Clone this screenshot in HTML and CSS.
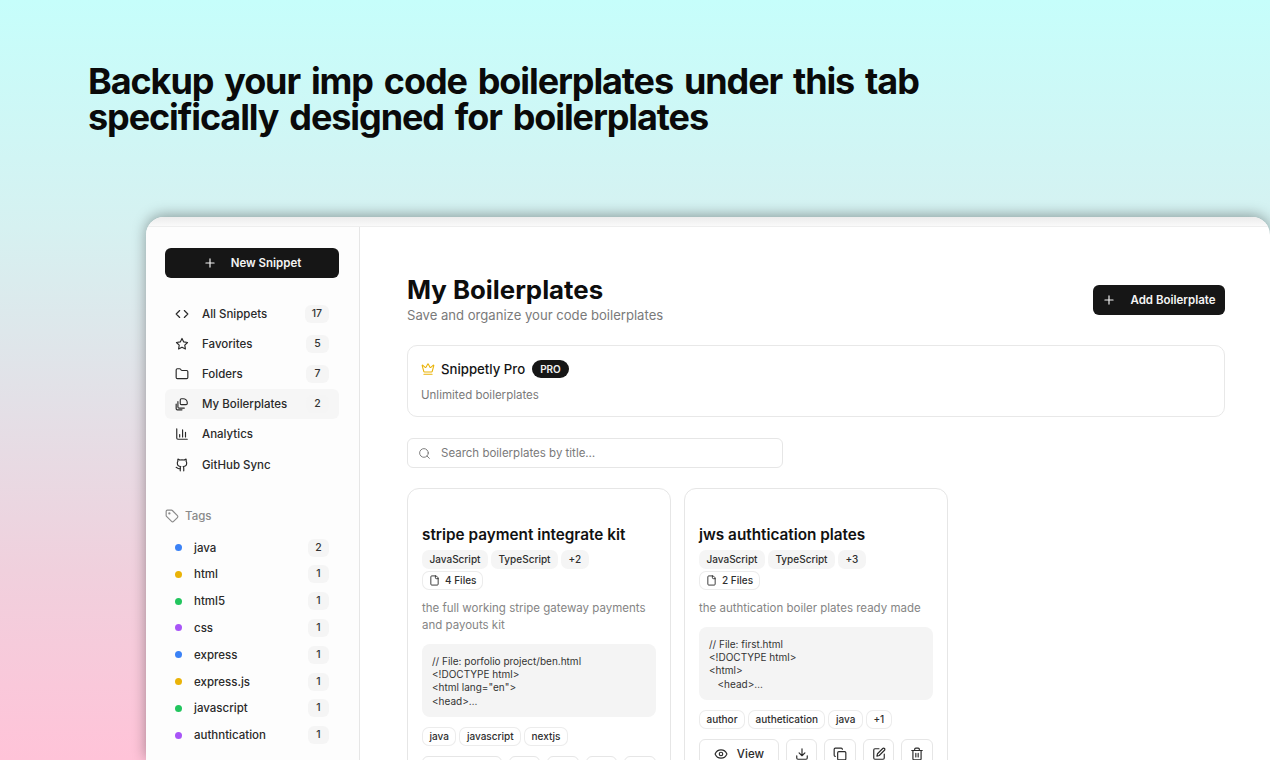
FILE: index.html
```html
<!DOCTYPE html>
<html lang="en">
<head>
  <meta charset="UTF-8" />
  <title>My Boilerplates</title>
  <link rel="stylesheet" href="styles.css">
</head>
<body>
  <svg class="sprite" width="0" height="0">
    <symbol id="i-plus" viewBox="0 0 24 24"><path d="M5 12h14M12 5v14"/></symbol>
    <symbol id="i-code" viewBox="0 0 24 24"><path d="m16 18 6-6-6-6M8 6l-6 6 6 6"/></symbol>
    <symbol id="i-star" viewBox="0 0 24 24"><path d="M12 2.5l2.94 5.95 6.56.95-4.75 4.63 1.12 6.54L12 17.48l-5.87 3.09 1.12-6.54L2.5 9.4l6.56-.95z"/></symbol>
    <symbol id="i-folder" viewBox="0 0 24 24"><path d="M20 20a2 2 0 0 0 2-2V8a2 2 0 0 0-2-2h-7.9a2 2 0 0 1-1.69-.9L9.6 3.9A2 2 0 0 0 7.93 3H4a2 2 0 0 0-2 2v13a2 2 0 0 0 2 2Z"/></symbol>
    <symbol id="i-plates" viewBox="0 0 24 24"><path d="M11 3h3a7 7 0 0 1 7 7v1a2 2 0 0 1-2 2h-8a2 2 0 0 1-2-2V5a2 2 0 0 1 2-2Z"/><path d="M5 8v9a2 2 0 0 0 2 2h9"/><path d="M2 12v8a2 2 0 0 0 2 2h8"/></symbol>
    <symbol id="i-chart" viewBox="0 0 24 24"><path d="M3 3v16a2 2 0 0 0 2 2h16"/><path d="M8 17v-4M13 17V5M18 17V9"/></symbol>
    <symbol id="i-github" viewBox="0 0 24 24"><path d="M15 22v-4a4.8 4.8 0 0 0-1-3.5c3 0 6-2 6-5.500.08-1.25-.27-2.48-1-3.5.28-1.15.28-2.35 0-3.5 0 0-1 0-3 1.5-2.64-.5-5.36-.5-8 0C6 2 5 2 5 2c-.3 1.15-.3 2.35 0 3.5A5.4 5.4 0 0 0 4 9c0 3.5 3 5.5 6 5.5-.39.49-.68 1.05-.85 1.65-.17.6-.22 1.23-.15 1.85v4"/><path d="M9 18c-4.51 2-5-2-7-2"/></symbol>
    <symbol id="i-tag" viewBox="0 0 24 24"><path d="M12.6 2.6A2 2 0 0 0 11.2 2H4a2 2 0 0 0-2 2v7.2a2 2 0 0 0 .6 1.4l8.7 8.7a2.4 2.4 0 0 0 3.4 0l6.6-6.6a2.4 2.4 0 0 0 0-3.4Z"/><circle cx="7.5" cy="7.5" r="1"/></symbol>
    <symbol id="i-crown" viewBox="0 0 24 24"><path d="M11.56 3.27a.5.5 0 0 1 .88 0l2.95 5.61a1 1 0 0 0 1.52.3l4.28-3.67a.5.5 0 0 1 .8.52l-2.83 10.25a1 1 0 0 1-.96.72H5.8a1 1 0 0 1-.96-.72L2.01 6.03a.5.5 0 0 1 .8-.52l4.28 3.67a1 1 0 0 0 1.52-.3z"/><path d="M5 21h14"/></symbol>
    <symbol id="i-search" viewBox="0 0 24 24"><circle cx="11" cy="11" r="8"/><path d="m21 21-4.3-4.3"/></symbol>
    <symbol id="i-file" viewBox="0 0 24 24"><path d="M15 2H6a2 2 0 0 0-2 2v16a2 2 0 0 0 2 2h12a2 2 0 0 0 2-2V7Z"/><path d="M14 2v4a2 2 0 0 0 2 2h4"/></symbol>
    <symbol id="i-eye" viewBox="0 0 24 24"><path d="M2.06 12.35a1 1 0 0 1 0-.7 10.75 10.75 0 0 1 19.88 0 1 1 0 0 1 0 .7 10.75 10.75 0 0 1-19.88 0"/><circle cx="12" cy="12" r="3"/></symbol>
    <symbol id="i-download" viewBox="0 0 24 24"><path d="M21 15v4a2 2 0 0 1-2 2H5a2 2 0 0 1-2-2v-4M7 10l5 5 5-5M12 15V3"/></symbol>
    <symbol id="i-copy" viewBox="0 0 24 24"><rect x="8" y="8" width="14" height="14" rx="2"/><path d="M4 16c-1.1 0-2-.9-2-2V4c0-1.100.9-2 2-2h10c1.100 0 2 .9 2 2"/></symbol>
    <symbol id="i-edit" viewBox="0 0 24 24"><path d="M12 3H5a2 2 0 0 0-2 2v14a2 2 0 0 0 2 2h14a2 2 0 0 0 2-2v-7"/><path d="M18.4 2.6a2.100 2.100 0 1 1 3 3L12.400 14.600l-4 1 1-4Z"/></symbol>
    <symbol id="i-trash" viewBox="0 0 24 24"><path d="M3 6h18M19 6v14a2 2 0 0 1-2 2H7a2 2 0 0 1-2-2V6M8 6V4a2 2 0 0 1 2-2h4a2 2 0 0 1 2 2v2M10 11v6M14 11v6"/></symbol>
  </svg>

  <h1 class="headline">Backup your imp code boilerplates under this tab<br>specifically designed for boilerplates</h1>

  <div class="window">
    <div class="window-top"></div>
    <div class="window-body">
      <aside class="sidebar">
        <button class="btn-dark btn-new"><svg class="icon"><use href="#i-plus"/></svg>New Snippet</button>

        <nav class="nav">
          <a class="nav-item"><svg class="icon"><use href="#i-code"/></svg><span>All Snippets</span><b class="count">17</b></a>
          <a class="nav-item"><svg class="icon"><use href="#i-star"/></svg><span>Favorites</span><b class="count">5</b></a>
          <a class="nav-item"><svg class="icon"><use href="#i-folder"/></svg><span>Folders</span><b class="count">7</b></a>
          <a class="nav-item active"><svg class="icon"><use href="#i-plates"/></svg><span>My Boilerplates</span><b class="count">2</b></a>
          <a class="nav-item"><svg class="icon"><use href="#i-chart"/></svg><span>Analytics</span></a>
          <a class="nav-item"><svg class="icon"><use href="#i-github"/></svg><span>GitHub Sync</span></a>
        </nav>

        <div class="tags-title"><svg class="icon"><use href="#i-tag"/></svg>Tags</div>
        <ul class="tag-list">
          <li><i class="dot blue"></i><span>java</span><b class="count">2</b></li>
          <li><i class="dot amber"></i><span>html</span><b class="count">1</b></li>
          <li><i class="dot green"></i><span>html5</span><b class="count">1</b></li>
          <li><i class="dot purple"></i><span>css</span><b class="count">1</b></li>
          <li><i class="dot blue"></i><span>express</span><b class="count">1</b></li>
          <li><i class="dot amber"></i><span>express.js</span><b class="count">1</b></li>
          <li><i class="dot green"></i><span>javascript</span><b class="count">1</b></li>
          <li><i class="dot purple"></i><span>authntication</span><b class="count">1</b></li>
        </ul>
      </aside>

      <main class="main">
        <header class="main-head">
          <div>
            <h2>My Boilerplates</h2>
            <p>Save and organize your code boilerplates</p>
          </div>
          <button class="btn-dark btn-add"><svg class="icon"><use href="#i-plus"/></svg>Add Boilerplate</button>
        </header>

        <section class="pro-card">
          <div class="pro-row">
            <svg class="icon crown"><use href="#i-crown"/></svg>
            <span class="pro-name">Snippetly Pro</span>
            <span class="pro-badge">PRO</span>
          </div>
          <p>Unlimited boilerplates</p>
        </section>

        <div class="search">
          <svg class="icon"><use href="#i-search"/></svg>
          <span>Search boilerplates by title…</span>
        </div>

        <div class="cards">
          <article class="card">
            <h3>stripe payment integrate kit</h3>
            <div class="chips">
              <span class="chip">JavaScript</span><span class="chip">TypeScript</span><span class="chip">+2</span>
            </div>
            <div class="chips file-row">
              <span class="chip outline files"><svg class="icon"><use href="#i-file"/></svg>4 Files</span>
            </div>
            <p class="desc">the full working stripe gateway payments and payouts kit</p>
            <pre class="code">// File: porfolio project/ben.html
&lt;!DOCTYPE html&gt;
&lt;html lang="en"&gt;
&lt;head&gt;…</pre>
            <div class="chips">
              <span class="chip outline">java</span><span class="chip outline">javascript</span><span class="chip outline">nextjs</span>
            </div>
            <div class="actions">
              <button class="act view"><svg class="icon"><use href="#i-eye"/></svg>View</button>
              <button class="act"><svg class="icon"><use href="#i-download"/></svg></button>
              <button class="act"><svg class="icon"><use href="#i-copy"/></svg></button>
              <button class="act"><svg class="icon"><use href="#i-edit"/></svg></button>
              <button class="act"><svg class="icon"><use href="#i-trash"/></svg></button>
            </div>
          </article>

          <article class="card">
            <h3>jws authtication plates</h3>
            <div class="chips">
              <span class="chip">JavaScript</span><span class="chip">TypeScript</span><span class="chip">+3</span>
            </div>
            <div class="chips file-row">
              <span class="chip outline files"><svg class="icon"><use href="#i-file"/></svg>2 Files</span>
            </div>
            <p class="desc">the authtication boiler plates ready made</p>
            <pre class="code">// File: first.html
&lt;!DOCTYPE html&gt;
&lt;html&gt;
   &lt;head&gt;…</pre>
            <div class="chips">
              <span class="chip outline">author</span><span class="chip outline">authetication</span><span class="chip outline">java</span><span class="chip outline">+1</span>
            </div>
            <div class="actions">
              <button class="act view"><svg class="icon"><use href="#i-eye"/></svg>View</button>
              <button class="act"><svg class="icon"><use href="#i-download"/></svg></button>
              <button class="act"><svg class="icon"><use href="#i-copy"/></svg></button>
              <button class="act"><svg class="icon"><use href="#i-edit"/></svg></button>
              <button class="act"><svg class="icon"><use href="#i-trash"/></svg></button>
            </div>
          </article>
        </div>
      </main>
    </div>
  </div>
</body>
</html>
```

FILE: styles.css
```css
html, body {
  height: 100%;
}
body {
  margin: 0;
  height: 760px;
  overflow: hidden;
  font-family: Inter, 'Liberation Sans', sans-serif;
  color: #141414;
  background: linear-gradient(to bottom, #c6fefb 0%, #d6f1f1 30%, #f0d0dd 75%, #ffc3d8 100%);
}
.sprite {
  display: block;
}
.icon {
  width: 14px;
  height: 14px;
  flex: none;
  fill: none;
  stroke: currentColor;
  stroke-width: 2;
  stroke-linecap: round;
  stroke-linejoin: round;
}
.headline {
  margin: 0;
  padding: 63px 0 0 88px;
  height: 217px;
  box-sizing: border-box;
  font-size: 36px;
  line-height: 36px;
  font-weight: 700;
  letter-spacing: -1.1px;
  word-spacing: 3.5px;
  color: #0a0a0a;
  white-space: nowrap;
}
.window {
  margin-left: 146px;
  width: 1124px;
  height: 543px;
  border-radius: 18px 18px 0 0;
  background: #fff;
  box-shadow: 0 -2px 14px rgba(0, 0, 0, 0.35);
  overflow: hidden;
}
.window-top {
  height: 10px;
  background: linear-gradient(to bottom, #ececec, #fafafa);
  border-bottom: 1px solid #eeeeee;
  box-sizing: border-box;
}
.window-body {
  display: flex;
  height: 533px;
}

/* sidebar */
.sidebar {
  width: 214px;
  flex: none;
  box-sizing: border-box;
  padding: 21px 20px 0 19px;
  background: #fdfdfd;
  border-right: 1px solid #e6e6e6;
}
.btn-dark {
  display: flex;
  align-items: center;
  justify-content: center;
  border: none;
  border-radius: 6px;
  background: #161616;
  color: #f4f4f4;
  font-family: inherit;
  font-weight: 600;
  font-size: 11.5px;
}
.btn-new {
  width: 174px;
  height: 30px;
  gap: 14px;
}
.nav {
  margin-top: 20.5px;
}
.nav-item {
  display: flex;
  align-items: center;
  height: 30.2px;
  padding: 0 10px;
  border-radius: 6px;
  font-size: 11.5px;
  font-weight: 500;
  color: #2a2a2a;
}
.nav-item .icon {
  margin-right: 13px;
}
.nav-item.active {
  background: #f6f6f6;
}
.nav-item span {
  flex: 1;
}
.count {
  min-width: 9px;
  padding: 0 7px;
  height: 18px;
  line-height: 18px;
  border-radius: 6px;
  background: #f5f5f5;
  font-size: 10.5px;
  font-weight: 500;
  color: #333;
  text-align: center;
}
.tags-title {
  display: flex;
  align-items: center;
  gap: 6px;
  margin-top: 26.5px;
  height: 20px;
  font-size: 11.5px;
  font-weight: 500;
  color: #8a8a8a;
}
.tag-list {
  list-style: none;
  margin: 8px 0 0;
  padding: 0;
}
.tag-list li {
  display: flex;
  align-items: center;
  height: 26.8px;
  padding: 0 10px;
  font-size: 11.5px;
  font-weight: 500;
  color: #2a2a2a;
}
.tag-list span {
  flex: 1;
}
.tag-list .count {
  padding: 0 6px;
}
.dot {
  width: 7px;
  height: 7px;
  border-radius: 50%;
  margin-right: 12px;
}
.blue { background: #3b82f6; }
.amber { background: #eab308; }
.green { background: #22c55e; }
.purple { background: #a855f7; }

/* main */
.main {
  flex: 1;
  padding: 47px 45px 0 47px;
  min-width: 0;
}
.main-head {
  display: flex;
  justify-content: space-between;
  align-items: center;
}
.main-head h2 {
  margin: 0;
  font-size: 25.8px;
  line-height: 32px;
  font-weight: 700;
  color: #0d0d0d;
}
.main-head p {
  margin: 0;
  font-size: 13.1px;
  line-height: 18px;
  color: #7a7a7a;
}
.btn-add {
  width: 132px;
  height: 30px;
  gap: 14px;
  margin-top: 2px;
}
.pro-card {
  margin-top: 21px;
  height: 72px;
  box-sizing: border-box;
  padding: 13px 13px;
  border: 1px solid #e8e8e8;
  border-radius: 10px;
}
.pro-row {
  display: flex;
  align-items: center;
  height: 20px;
}
.crown {
  color: #eab308;
  stroke-width: 1.8;
  margin-right: 6px;
}
.pro-name {
  font-size: 13.2px;
  font-weight: 500;
  margin-right: 7px;
}
.pro-badge {
  background: #161616;
  color: #f0f0f0;
  border-radius: 9px;
  padding: 0 8px;
  height: 18px;
  line-height: 18px;
  font-size: 10px;
  font-weight: 600;
}
.pro-card p {
  margin: 9px 0 0;
  font-size: 11.5px;
  color: #7a7a7a;
}
.search {
  display: flex;
  align-items: center;
  gap: 10px;
  margin-top: 21px;
  width: 376px;
  height: 30px;
  box-sizing: border-box;
  padding: 0 10px;
  border: 1px solid #e6e6e6;
  border-radius: 6px;
  font-size: 11.5px;
  color: #7a7a7a;
}
.search .icon {
  width: 13px;
  height: 13px;
  stroke-width: 1.8;
}
.cards {
  display: grid;
  grid-template-columns: repeat(3, 264px);
  gap: 13px;
  margin-top: 20px;
  align-items: start;
}
.card {
  height: 300px;
  box-sizing: border-box;
  padding: 36px 14px 0;
  border: 1px solid #e6e6e6;
  border-radius: 12px;
}
.card h3 {
  margin: 0;
  font-size: 15.3px;
  line-height: 20px;
  font-weight: 600;
  color: #111;
}
.chips {
  display: flex;
  flex-wrap: wrap;
  gap: 2px 3px;
  margin-top: 5px;
}
.chips.file-row {
  margin-top: 2px;
}
.chip {
  height: 19px;
  line-height: 19px;
  padding: 0 7.5px;
  border-radius: 7px;
  background: #f5f5f5;
  font-size: 10px;
  font-weight: 500;
  color: #2e2e2e;
  white-space: nowrap;
}
.chip.outline {
  background: #fff;
  box-shadow: inset 0 0 0 1px #ececec;
}
.chip.files {
  display: flex;
  align-items: center;
  gap: 5px;
  padding: 0 7px;
}
.chip.files .icon {
  width: 11px;
  height: 11px;
}
.desc {
  margin: 10px 0 0;
  font-size: 11.5px;
  line-height: 17px;
  color: #858585;
}
.code {
  margin: 9.5px 0 10px;
  padding: 11px 10px 0;
  height: 73.5px;
  box-sizing: border-box;
  border-radius: 8px;
  background: #f4f4f4;
  font-family: Inter, 'Liberation Sans', sans-serif;
  font-size: 10px;
  line-height: 13.4px;
  color: #333;
}
.actions {
  display: flex;
  gap: 7px;
  margin-top: 10px;
}
.act {
  display: flex;
  align-items: center;
  justify-content: center;
  width: 32px;
  height: 30px;
  padding: 0;
  border: 1px solid #e6e6e6;
  border-radius: 6px;
  background: #fff;
  color: #2a2a2a;
  font-family: inherit;
  font-size: 11.5px;
  font-weight: 500;
}
.act.view {
  width: 81px;
  gap: 9px;
}
```
